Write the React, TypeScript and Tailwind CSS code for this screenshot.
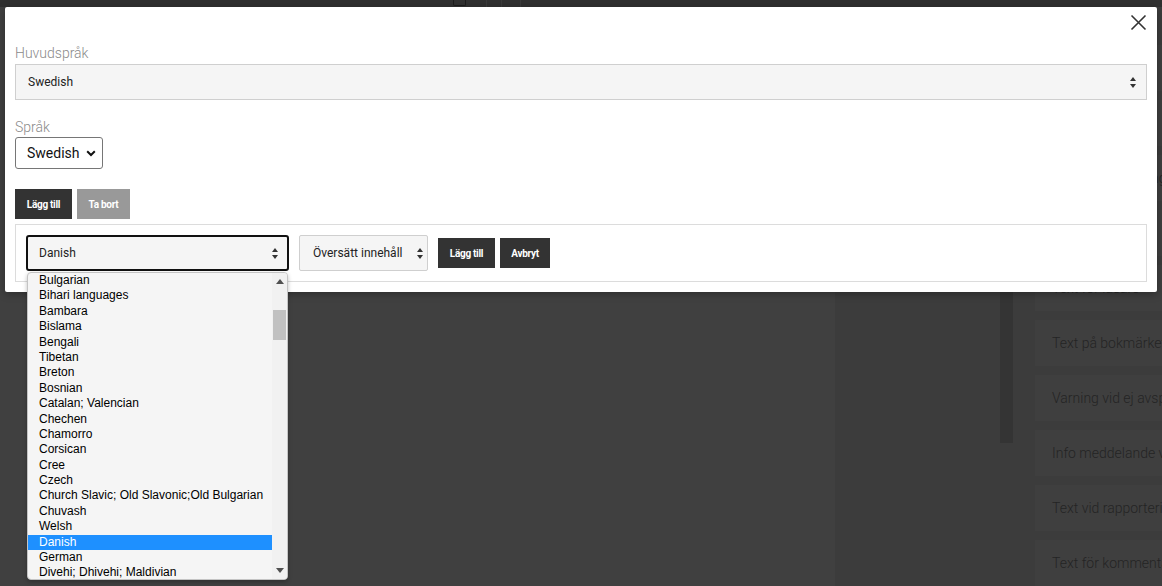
import React from "react";

const UpDown = ({ color = "#333" }: { color?: string }) => (
  <svg width="6" height="11" viewBox="0 0 6 11" className="shrink-0">
    <polygon points="0,4 3,0 6,4" fill={color} />
    <polygon points="0,7 3,11 6,7" fill={color} />
  </svg>
);

const languages = [
  "Bulgarian",
  "Bihari languages",
  "Bambara",
  "Bislama",
  "Bengali",
  "Tibetan",
  "Breton",
  "Bosnian",
  "Catalan; Valencian",
  "Chechen",
  "Chamorro",
  "Corsican",
  "Cree",
  "Czech",
  "Church Slavic; Old Slavonic;Old Bulgarian",
  "Chuvash",
  "Welsh",
  "Danish",
  "German",
  "Divehi; Dhivehi; Maldivian",
];

const cards = [
  "Rubrik för sidan",
  "Text för knappen",
  "Text vid inloggning",
  "Text för länken",
  "Text för läsare",
  "Text på bokmärket",
  "Varning vid ej avsparat",
  "Info meddelande vid",
  "Text vid rapportering",
  "Text för kommentarer",
];

export default function App() {
  return (
    <div className="relative h-[586px] w-[1162px] overflow-hidden bg-[#3b3b3b] font-['Roboto',sans-serif]">
      {/* page behind the overlay */}
      <div className="flex h-full flex-col">
        <div className="flex h-[7px] shrink-0 bg-[#303030]">
          <div className="ml-[453px] h-[6px] w-[13px] rounded-b-[2px] border-x border-b border-[#1c1c1c]" />
          <div className="ml-[20px] h-[7px] w-[1px] bg-[#3a3a3a]" />
          <div className="ml-[14px] h-[7px] w-[1px] bg-[#3a3a3a]" />
          <div className="ml-[18px] h-[7px] w-[1px] bg-[#3a3a3a]" />
        </div>
        <div className="flex min-h-0 flex-1">
          <div className="w-[835px] shrink-0 bg-[#404040]" />
          <div className="w-[165px] shrink-0 bg-[#3c3c3c]" />
          <div className="flex w-[13px] shrink-0 flex-col bg-[#3c3c3c]">
            <div className="h-[436px] bg-[#343434]" />
          </div>
          <div className="flex min-w-0 flex-1 flex-col gap-[9px] overflow-hidden bg-[#3c3c3c] pl-[22px] pt-[38px]">
            {cards.map((c) => (
              <div
                key={c}
                className="flex h-[46px] shrink-0 items-center whitespace-nowrap bg-[#3f3f3f] pl-[17px] text-[14px] font-light text-[#242424]"
              >
                {c}
              </div>
            ))}
          </div>
        </div>
      </div>

      {/* modal */}
      <div className="absolute left-[5px] top-[7px] flex h-[285px] w-[1152px] flex-col rounded-[2px] bg-white px-[10px] shadow-[0_2px_8px_rgba(0,0,0,0.3)]">
        <div className="flex h-[36px] shrink-0 justify-end pr-[0px] pt-[7px]">
          <svg width="17" height="17" viewBox="0 0 17 17">
            <path d="M1.5 1.5 L15.5 15.5 M15.5 1.5 L1.5 15.5" stroke="#333" strokeWidth="1.6" />
          </svg>
        </div>

        <div className="text-[14px] font-light leading-[21px] text-[#8a8a8a]">Huvudspråk</div>
        <div className="flex h-[36px] items-center justify-between border border-[#cfcfcf] bg-[#f5f5f5] pl-[12px] pr-[10px] text-[12px] text-[#222]">
          <span>Swedish</span>
          <UpDown />
        </div>

        <div className="mt-[17px] text-[14px] font-light leading-[20px] text-[#8a8a8a]">Språk</div>
        <div className="flex h-[32px] w-[88px] items-center justify-between rounded-[3px] border border-[#767676] bg-white pl-[11px] pr-[6px] text-[14px] text-[#111]">
          <span>Swedish</span>
          <svg width="10" height="7" viewBox="0 0 10 7">
            <path d="M1.2 1.3 L5 5 L8.8 1.3" stroke="#111" strokeWidth="2" fill="none" />
          </svg>
        </div>

        <div className="mt-[20px] flex gap-[5px]">
          <div className="flex h-[30px] w-[57px] items-center justify-center bg-[#333] text-[10px] font-bold tracking-[-0.3px] text-white">
            Lägg till
          </div>
          <div className="flex h-[30px] w-[53px] items-center justify-center bg-[#999] text-[10px] font-bold tracking-[-0.3px] text-white">
            Ta bort
          </div>
        </div>

        <div className="mt-[5px] flex h-[58px] items-start gap-[10px] border border-[#dcdcdc] px-[10px] pt-[10px]">
          <div className="relative w-[263px]">
            <div className="flex h-[36px] items-center justify-between rounded-[3px] border-2 border-[#111] bg-[#f5f5f5] pl-[11px] pr-[9px] text-[12px] text-[#222]">
              <span>Danish</span>
              <UpDown />
            </div>
            {/* open option list */}
            <div className="absolute left-[1px] top-[37px] z-10 flex h-[308px] w-[261px] overflow-hidden rounded-[4px] border border-[#c4c4c4] bg-[#f5f5f5] font-['Liberation_Sans',Arial,sans-serif] text-[12px] text-black shadow-[0_2px_4px_rgba(0,0,0,0.25)]">
              <div className="flex w-[244px] flex-col">
                {languages.map((l) => (
                  <div
                    key={l}
                    className={
                      l === "Danish"
                        ? "h-[15.4px] shrink-0 whitespace-nowrap bg-[#1e90ff] pl-[11px] leading-[15.4px] text-white"
                        : "h-[15.4px] shrink-0 whitespace-nowrap pl-[11px] leading-[15.4px]"
                    }
                  >
                    {l}
                  </div>
                ))}
              </div>
              <div className="flex w-[15px] flex-col items-center bg-[#f1f1f1]">
                <svg width="8" height="5" viewBox="0 0 8 5" className="mt-[6px]">
                  <polygon points="0,5 4,0 8,5" fill="#505050" />
                </svg>
                <div className="mt-[26px] h-[30px] w-[13px] bg-[#c1c1c1]" />
                <div className="flex-1" />
                <svg width="8" height="5" viewBox="0 0 8 5" className="mb-[6px]">
                  <polygon points="0,0 8,0 4,5" fill="#505050" />
                </svg>
              </div>
            </div>
          </div>
          <div className="flex h-[36px] w-[129px] items-center justify-between rounded-[2px] border border-[#cfcfcf] bg-[#f5f5f5] pl-[13px] pr-[4px] text-[12px] text-[#222]">
            <span>Översätt innehåll</span>
            <UpDown />
          </div>
          <div className="mt-[3px] flex h-[30px] w-[57px] items-center justify-center bg-[#333] text-[10px] font-bold tracking-[-0.3px] text-white">
            Lägg till
          </div>
          <div className="-ml-[5px] mt-[3px] flex h-[30px] w-[50px] items-center justify-center bg-[#333] text-[10px] font-bold tracking-[-0.3px] text-white">
            Avbryt
          </div>
        </div>
      </div>
    </div>
  );
}
